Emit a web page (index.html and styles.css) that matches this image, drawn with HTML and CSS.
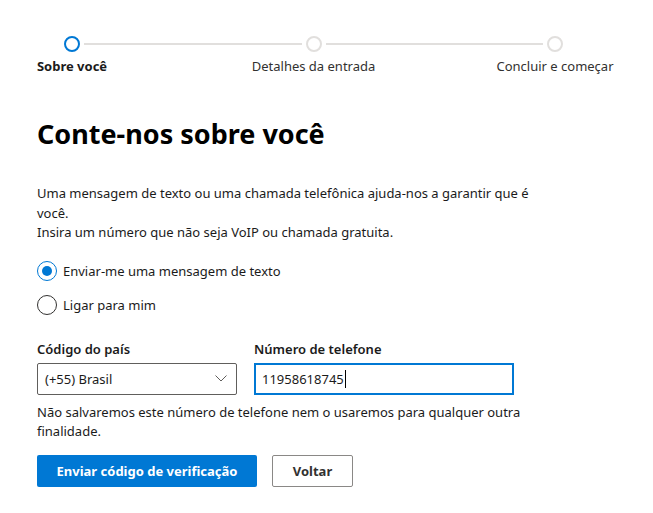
FILE: index.html
```html
<!DOCTYPE html>
<html lang="pt-BR">
<head>
<meta charset="utf-8">
<link rel="stylesheet" href="styles.css">
</head>
<body>
<div class="page">
  <div class="stepper">
    <div class="track">
      <span class="dot active"></span>
      <span class="line"></span>
      <span class="dot"></span>
      <span class="line"></span>
      <span class="dot"></span>
    </div>
    <div class="labels">
      <span class="step-label current">Sobre você</span>
      <span class="step-label">Detalhes da entrada</span>
      <span class="step-label">Concluir e começar</span>
    </div>
  </div>

  <div class="form">
    <h1 class="title">Conte-nos sobre você</h1>
    <p class="intro">Uma mensagem de texto ou uma chamada telefônica ajuda-nos a garantir que é você.<br>Insira um número que não seja VoIP ou chamada gratuita.</p>

    <div class="radios">
      <label class="radio"><span class="radio-circle checked"></span><span>Enviar-me uma mensagem de texto</span></label>
      <label class="radio"><span class="radio-circle"></span><span>Ligar para mim</span></label>
    </div>

    <div class="fields">
      <div class="field country">
        <div class="field-label">Código do país</div>
        <div class="select">
          <span>(+55) Brasil</span>
          <svg class="chev" width="12" height="7" viewBox="0 0 12 7"><path d="M0.5 0.5 L6 6 L11.5 0.5" fill="none" stroke="#605e5c" stroke-width="1"/></svg>
        </div>
      </div>
      <div class="field phone">
        <div class="field-label">Número de telefone</div>
        <div class="input"><span>11958618745</span><span class="caret"></span></div>
      </div>
    </div>

    <p class="note">Não salvaremos este número de telefone nem o usaremos para qualquer outra finalidade.</p>

    <div class="actions">
      <button class="btn primary">Enviar código de verificação</button>
      <button class="btn secondary">Voltar</button>
    </div>
  </div>
</div>
</body>
</html>
```

FILE: styles.css
```css
* { box-sizing: border-box; }
html, body { margin: 0; padding: 0; background: #fff; }
body {
  font-family: "Noto Sans", "Open Sans", sans-serif;
  font-size: 13px;
  color: #1b1b1b;
}
.page { padding-top: 36px; }

.stepper { width: 627px; }
.track {
  display: flex;
  align-items: center;
  margin-left: 64px;
  width: 499px;
  height: 16px;
}
.dot {
  width: 16px; height: 16px;
  border-radius: 50%;
  border: 2px solid #e1dfdd;
  flex: none;
}
.dot.active { border-color: #0078d4; }
.line {
  flex: 1;
  height: 2px;
  background: #e1dfdd;
  margin: 0 4px;
}
.labels {
  display: flex;
  justify-content: space-between;
  margin-left: 8px;
  width: 611px;
  margin-top: 4px;
}
.step-label {
  width: 128px;
  text-align: center;
  line-height: 20px;
  color: #323130;
  white-space: nowrap;
}
.step-label.current { font-weight: 700; color: #1b1b1b; }

.form { padding-left: 37px; width: 560px; }
.title {
  margin: 0;
  margin-top: 40px;
  font-size: 27px;
  font-weight: 700;
  line-height: 36px;
  color: #000;
}
.intro {
  margin: 32px 0 0;
  line-height: 19.5px;
  width: 510px;
}
.radios { margin-top: 18px; display: flex; flex-direction: column; gap: 14px; }
.radio { display: flex; align-items: center; gap: 6px; line-height: 20px; }
.radio-circle {
  width: 20px; height: 20px;
  border-radius: 50%;
  border: 1px solid #323130;
  flex: none;
  display: flex; align-items: center; justify-content: center;
}
.radio-circle.checked { border-color: #0078d4; }
.radio-circle.checked::after {
  content: "";
  width: 10px; height: 10px;
  border-radius: 50%;
  background: #0078d4;
}

.fields { display: flex; gap: 17px; margin-top: 24px; }
.field-label { font-weight: 600; line-height: 20px; margin-bottom: 4px; }
.country { width: 200px; }
.phone { width: 260px; }
.select {
  height: 32px;
  border: 1px solid #605e5c;
  border-radius: 2px;
  display: flex; align-items: center; justify-content: space-between;
  padding: 0 8px 0 7px;
}
.chev { margin-right: 1px; }
.input {
  height: 32px;
  border: 2px solid #0078d4;
  display: flex; align-items: center;
  padding: 0 6px;
}
.caret { width: 1px; height: 18px; background: #000; margin-left: 1px; }

.note { margin: 8px 0 0; line-height: 19.5px; width: 510px; }

.actions { display: flex; gap: 15px; margin-top: 13px; }
.btn {
  font-family: inherit;
  font-size: 13px;
  font-weight: 700;
  height: 32px;
  border-radius: 2px;
  padding: 0;
  white-space: nowrap;
  cursor: pointer;
}
.btn.primary { background: #0078d4; color: #fff; border: none; width: 220px; }
.btn.secondary { background: #fff; color: #323130; border: 1px solid #8a8886; width: 81px; }
```
